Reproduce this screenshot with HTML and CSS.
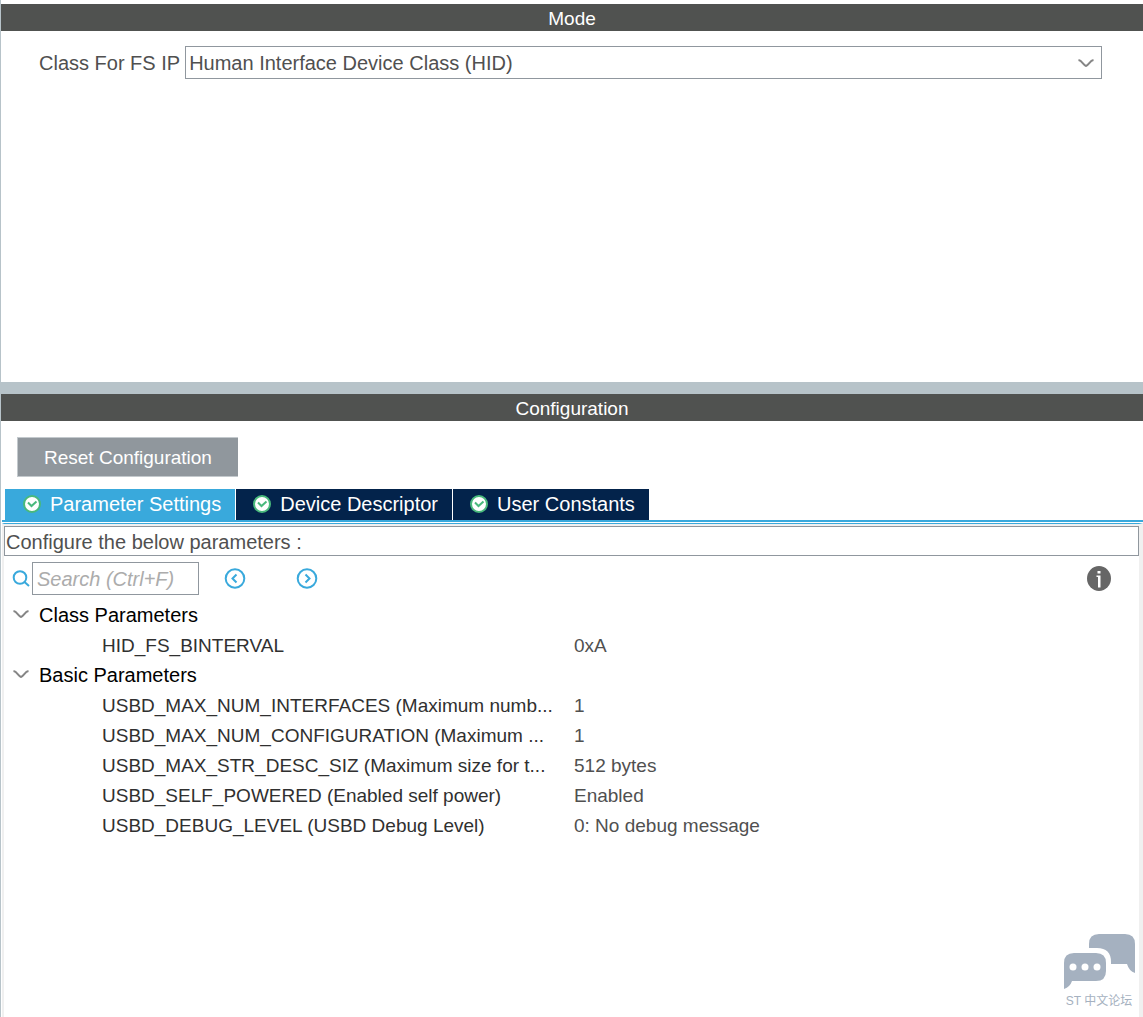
FILE: index.html
```html
<!DOCTYPE html>
<html lang="en">
<head>
    <meta charset="UTF-8">
    <meta name="viewport" content="width=device-width, initial-scale=1.0">
    <title>Mode and Configuration</title>
    <link rel="stylesheet" href="styles.css">
</head>
<body>
    <section class="mode">
        <h2 class="bar">Mode</h2>
        <div class="mode-row">
            <label for="fs-class">Class For FS IP</label>
            <div class="select-wrap">
                <select id="fs-class">
                    <option>Human Interface Device Class (HID)</option>
                </select>
                <svg class="chevron" width="16" height="9" viewBox="0 0 16 9"><path d="M0.500 1C4 1.500 5.500 6.500 8 7C10.500 6.500 12 1.500 15.500 1" /></svg>
            </div>
        </div>
    </section>

    <div class="splitter"></div>

    <section class="config">
        <h2 class="bar">Configuration</h2>
        <button class="reset" type="button">Reset Configuration</button>

        <div class="tabs" role="tablist">
            <button class="tab active" type="button" role="tab" aria-selected="true">
                <svg width="18" height="18" viewBox="0 0 18 18"><circle class="ring" cx="9" cy="9" r="8" /><path class="tick" d="M5 7.500L8.500 11L13.500 6.500" /></svg>
                Parameter Settings
            </button>
            <button class="tab" type="button" role="tab" aria-selected="false">
                <svg width="18" height="18" viewBox="0 0 18 18"><circle class="ring" cx="9" cy="9" r="8" /><path class="tick" d="M5 7.500L8.500 11L13.500 6.500" /></svg>
                Device Descriptor
            </button>
            <button class="tab" type="button" role="tab" aria-selected="false">
                <svg width="18" height="18" viewBox="0 0 18 18"><circle class="ring" cx="9" cy="9" r="8" /><path class="tick" d="M5 7.500L8.500 11L13.500 6.500" /></svg>
                User Constants
            </button>
        </div>

        <div class="tab-panel">
            <p class="hint">Configure the below parameters :</p>

            <div class="toolbar">
                <label class="search-label" for="search" aria-label="Search">
                    <svg width="18" height="18" viewBox="0 0 18 18"><circle cx="8" cy="8.500" r="6.300" /><path d="M12.500 13L17 17" /></svg>
                </label>
                <input id="search" class="search" type="text" placeholder="Search (Ctrl+F)">
                <button class="round prev" type="button" aria-label="Previous">
                    <svg width="22" height="22" viewBox="0 0 22 22"><circle cx="11" cy="11.500" r="9.300" /><path d="M12.500 7.500L8.500 11.500L12.500 15.500" /></svg>
                </button>
                <button class="round next" type="button" aria-label="Next">
                    <svg width="22" height="22" viewBox="0 0 22 22"><circle cx="11" cy="11.500" r="9.300" /><path d="M9.500 7.500L13.500 11.500L9.500 15.500" /></svg>
                </button>
                <button class="round info" type="button" aria-label="Information">
                    <svg width="24" height="26" viewBox="0 0 24 26"><ellipse cx="12" cy="13.500" rx="12" ry="12.500" /><path d="M10.500 6h3v2.500h-3zM9.500 10.500h4v12h-2.500v-10.500h-1.500z" /></svg>
                </button>
            </div>

            <table class="params">
                <colgroup>
                    <col class="col-name">
                    <col>
                </colgroup>
                <tbody>
                    <tr>
                        <th colspan="2">
                            <button class="group" type="button" aria-expanded="true">
                                <svg class="chevron" width="16" height="9" viewBox="0 0 16 9"><path d="M0.500 1C4 1.500 5.500 6.500 8 7C10.500 6.500 12 1.500 15.500 1" /></svg>
                                Class Parameters
                            </button>
                        </th>
                    </tr>
                    <tr>
                        <td>HID_FS_BINTERVAL</td>
                        <td>0xA</td>
                    </tr>
                </tbody>
                <tbody>
                    <tr>
                        <th colspan="2">
                            <button class="group" type="button" aria-expanded="true">
                                <svg class="chevron" width="16" height="9" viewBox="0 0 16 9"><path d="M0.500 1C4 1.500 5.500 6.500 8 7C10.500 6.500 12 1.500 15.500 1" /></svg>
                                Basic Parameters
                            </button>
                        </th>
                    </tr>
                    <tr>
                        <td>USBD_MAX_NUM_INTERFACES (Maximum numb...</td>
                        <td>1</td>
                    </tr>
                    <tr>
                        <td>USBD_MAX_NUM_CONFIGURATION (Maximum ...</td>
                        <td>1</td>
                    </tr>
                    <tr>
                        <td>USBD_MAX_STR_DESC_SIZ (Maximum size for t...</td>
                        <td>512 bytes</td>
                    </tr>
                    <tr>
                        <td>USBD_SELF_POWERED (Enabled self power)</td>
                        <td>Enabled</td>
                    </tr>
                    <tr>
                        <td>USBD_DEBUG_LEVEL (USBD Debug Level)</td>
                        <td>0: No debug message</td>
                    </tr>
                </tbody>
            </table>
        </div>
    </section>

    <div class="watermark">
        <svg width="72" height="56" viewBox="0 0 72 56">
            <path d="M26 15V11Q26 1 36 1H62Q72 1 72 11V40Q66 38 64 31H48V29Q48 15 34 15Z" />
            <path d="M11 20H33Q43 20 43 30V38Q43 48 33 48H9Q7 54 1 56V30Q1 20 11 20Z" />
            <g class="dots"><circle cx="10" cy="34" r="3.500" /><circle cx="22" cy="34" r="3.500" /><circle cx="34" cy="34" r="3.500" /></g>
        </svg>
        <span>ST 中文论坛</span>
    </div>
</body>
</html>
```
FILE: styles.css
```css
* {
    box-sizing: border-box;
}

body {
    margin: 0;
    min-height: 100vh;
    display: grid;
    grid-template-rows: 38fr 12px 62fr;
    border-left: 1px solid #b7c3c9;
    background-color: white;
    color: #505050;
    font-family: "Liberation Sans", Arial, sans-serif;
    font-size: 20px;
    line-height: 24px;
}

button, input, select {
    font: inherit;
    color: inherit;
    margin: 0;
    border-radius: 0;
}

svg {
    display: block;
    flex: none;
}

.bar {
    margin: 0;
    height: 27px;
    background-color: #505250;
    color: white;
    font-size: 19px;
    font-weight: normal;
    line-height: 30px;
    text-align: center;
}

/* Mode */
.mode {
    padding-top: 4px;
}

.mode-row {
    display: flex;
    align-items: center;
    gap: 5px;
    padding: 15px 41px 0 38px;
}

.select-wrap {
    flex: 1;
    position: relative;
}

.select-wrap select {
    display: block;
    width: 100%;
    height: 33px;
    padding: 0 30px 0 3px;
    appearance: none;
    border: 1px solid #90979e;
    background-color: white;
}

.select-wrap .chevron {
    position: absolute;
    right: 8px;
    top: 13px;
    pointer-events: none;
}

.chevron {
    fill: none;
    stroke: #858585;
    stroke-width: 2;
}

.splitter {
    background-color: #b7c3c9;
}

/* Configuration */
.config {
    display: flex;
    flex-direction: column;
}

.reset {
    align-self: flex-start;
    height: 40px;
    margin: 16px 0 12px 16px;
    padding: 2px 26px 0;
    border: 1px solid #c3c9cd;
    border-right: none;
    background-color: #90979d;
    color: white;
    font-size: 19px;
}

.tabs {
    display: flex;
    gap: 1px;
    margin-left: 1px;
    padding-left: 3px;
    border-bottom: 2px solid #39a9dc;
}

.tab {
    display: flex;
    align-items: center;
    gap: 9px;
    height: 31px;
    padding: 0 14px 0 17px;
    border: none;
    background-color: #03234b;
    color: white;
}

.tab.active {
    padding-left: 18px;
    background-color: #39a9dc;
}

.ring {
    fill: white;
    stroke: #49b97c;
    stroke-width: 2;
}

.tick {
    fill: none;
    stroke: #49b97c;
    stroke-width: 2;
}

.tab-panel {
    flex: 1;
    margin: 1px 0 0 1px;
    padding-top: 2px;
    border-top: 1px solid #39a9dc;
    border-left: 2px solid #f0f0f0;
    border-right: 4px solid #f0f0f0;
}

.hint {
    margin: 0;
    height: 30px;
    padding-left: 1px;
    border: 1px solid #90979e;
    box-shadow: 0 -2px #f0f0f0;
    line-height: 31px;
}

.toolbar {
    display: flex;
    align-items: center;
    padding: 6px 28px 5px 8px;
}

.search-label {
    margin-right: 2px;
}

.search-label svg {
    fill: none;
    stroke: #39a9dc;
    stroke-width: 2;
}

.search {
    width: 167px;
    height: 33px;
    padding: 2px 4px 0;
    border: 1px solid #90979e;
}

.search::placeholder {
    color: #acacac;
    font-style: italic;
    opacity: 1;
}

.round {
    padding: 0;
    border: none;
    background: none;
}

.prev, .next {
    fill: none;
    stroke: #39a9dc;
    stroke-width: 2;
}

.prev {
    margin-left: 25px;
}

.next {
    margin-left: 50px;
}

.info {
    margin-left: auto;
    fill: #666;
}

.info path {
    fill: white;
}

.params {
    width: 100%;
    table-layout: fixed;
    border-collapse: collapse;
    white-space: nowrap;
}

.col-name {
    width: 570px;
}

.params th, .params td {
    height: 30px;
    padding: 0;
    font-weight: normal;
    text-align: left;
}

.params td {
    padding-top: 2px;
    font-size: 19px;
}

.params td:first-child {
    padding-left: 98px;
    color: #303030;
}

.group {
    display: flex;
    align-items: center;
    gap: 10px;
    padding: 0 0 0 9px;
    border: none;
    background: none;
    color: black;
}

/* Forum mark over the lower right corner */
.watermark {
    position: absolute;
    right: 8px;
    bottom: 4px;
    color: #a5b1c0;
    font-family: "Liberation Sans", "Noto Sans CJK SC", sans-serif;
    font-size: 12px;
    line-height: 24px;
    text-align: center;
}

.watermark svg {
    fill: #a5b1c0;
}

.watermark .dots {
    fill: white;
}
```
